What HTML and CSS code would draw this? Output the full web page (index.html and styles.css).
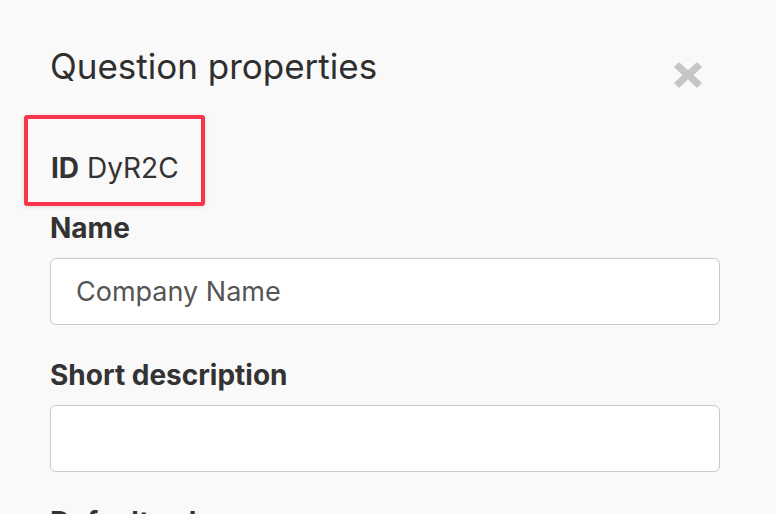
FILE: index.html
```html
<!DOCTYPE html>
<html>
<head>
<meta charset="utf-8">
<link rel="stylesheet" href="styles.css">
</head>
<body>
<div class="panel">
  <div class="header">
    <h1 class="title">Question properties</h1>
    <button class="close" aria-label="Close">
      <svg width="28" height="26" viewBox="0 0 28 26"><polygon points="1,5 5,1 14,9.5 23,1 27,5 18.5,13 27,21 23,25 14,16.5 5,25 1,21 9.5,13" fill="#c6c6c6" stroke="#c6c6c6" stroke-width="1.5" stroke-linejoin="round"/></svg>
    </button>
  </div>
  <div class="id-box"><span class="id-label">ID</span> DyR2C</div>
  <div class="field">
    <label class="label">Name</label>
    <div class="input">Company Name</div>
  </div>
  <div class="field">
    <label class="label">Short description</label>
    <div class="input"></div>
  </div>
  <div class="field">
    <label class="label">Default value</label>
  </div>
</div>
</body>
</html>
```

FILE: styles.css
```css
html, body {
  margin: 0;
  padding: 0;
  background: #f9f9f9;
  overflow: hidden;
}
body {
  font-family: Inter, "Liberation Sans", sans-serif;
  color: #333;
}
.panel {
  padding: 45px 56px 0 50px;
}
.header {
  display: flex;
  justify-content: space-between;
  align-items: flex-start;
}
.title {
  margin: 0;
  font-size: 35px;
  font-weight: 400;
  line-height: 42px;
  color: #2f2f2f;
}
.close {
  border: none;
  background: none;
  padding: 0;
  margin: 17px 18px 0 0;
  line-height: 0;
}
.id-box {
  margin: 27px 0 0 -26px;
  width: 150px;
  border: 4px solid #f8354a;
  border-radius: 3px;
  padding: 32px 0 17px 23px;
  font-size: 28px;
  line-height: 34px;
  box-shadow: 0 1px 4px rgba(0, 0, 0, 0.12);
}
.id-label {
  font-weight: 700;
}
.field {
  margin-top: 5px;
}
.label {
  display: block;
  font-size: 28px;
  font-weight: 700;
  line-height: 34px;
  margin-bottom: 13px;
}
.input {
  width: 670px;
  height: 67px;
  border: 1.5px solid #cacaca;
  border-radius: 6px;
  background: #fff;
  box-sizing: border-box;
  padding-left: 25px;
  display: flex;
  align-items: center;
  font-size: 27px;
  line-height: 34px;
  color: #555;
}
.field + .field {
  margin-top: 33px;
}
```
